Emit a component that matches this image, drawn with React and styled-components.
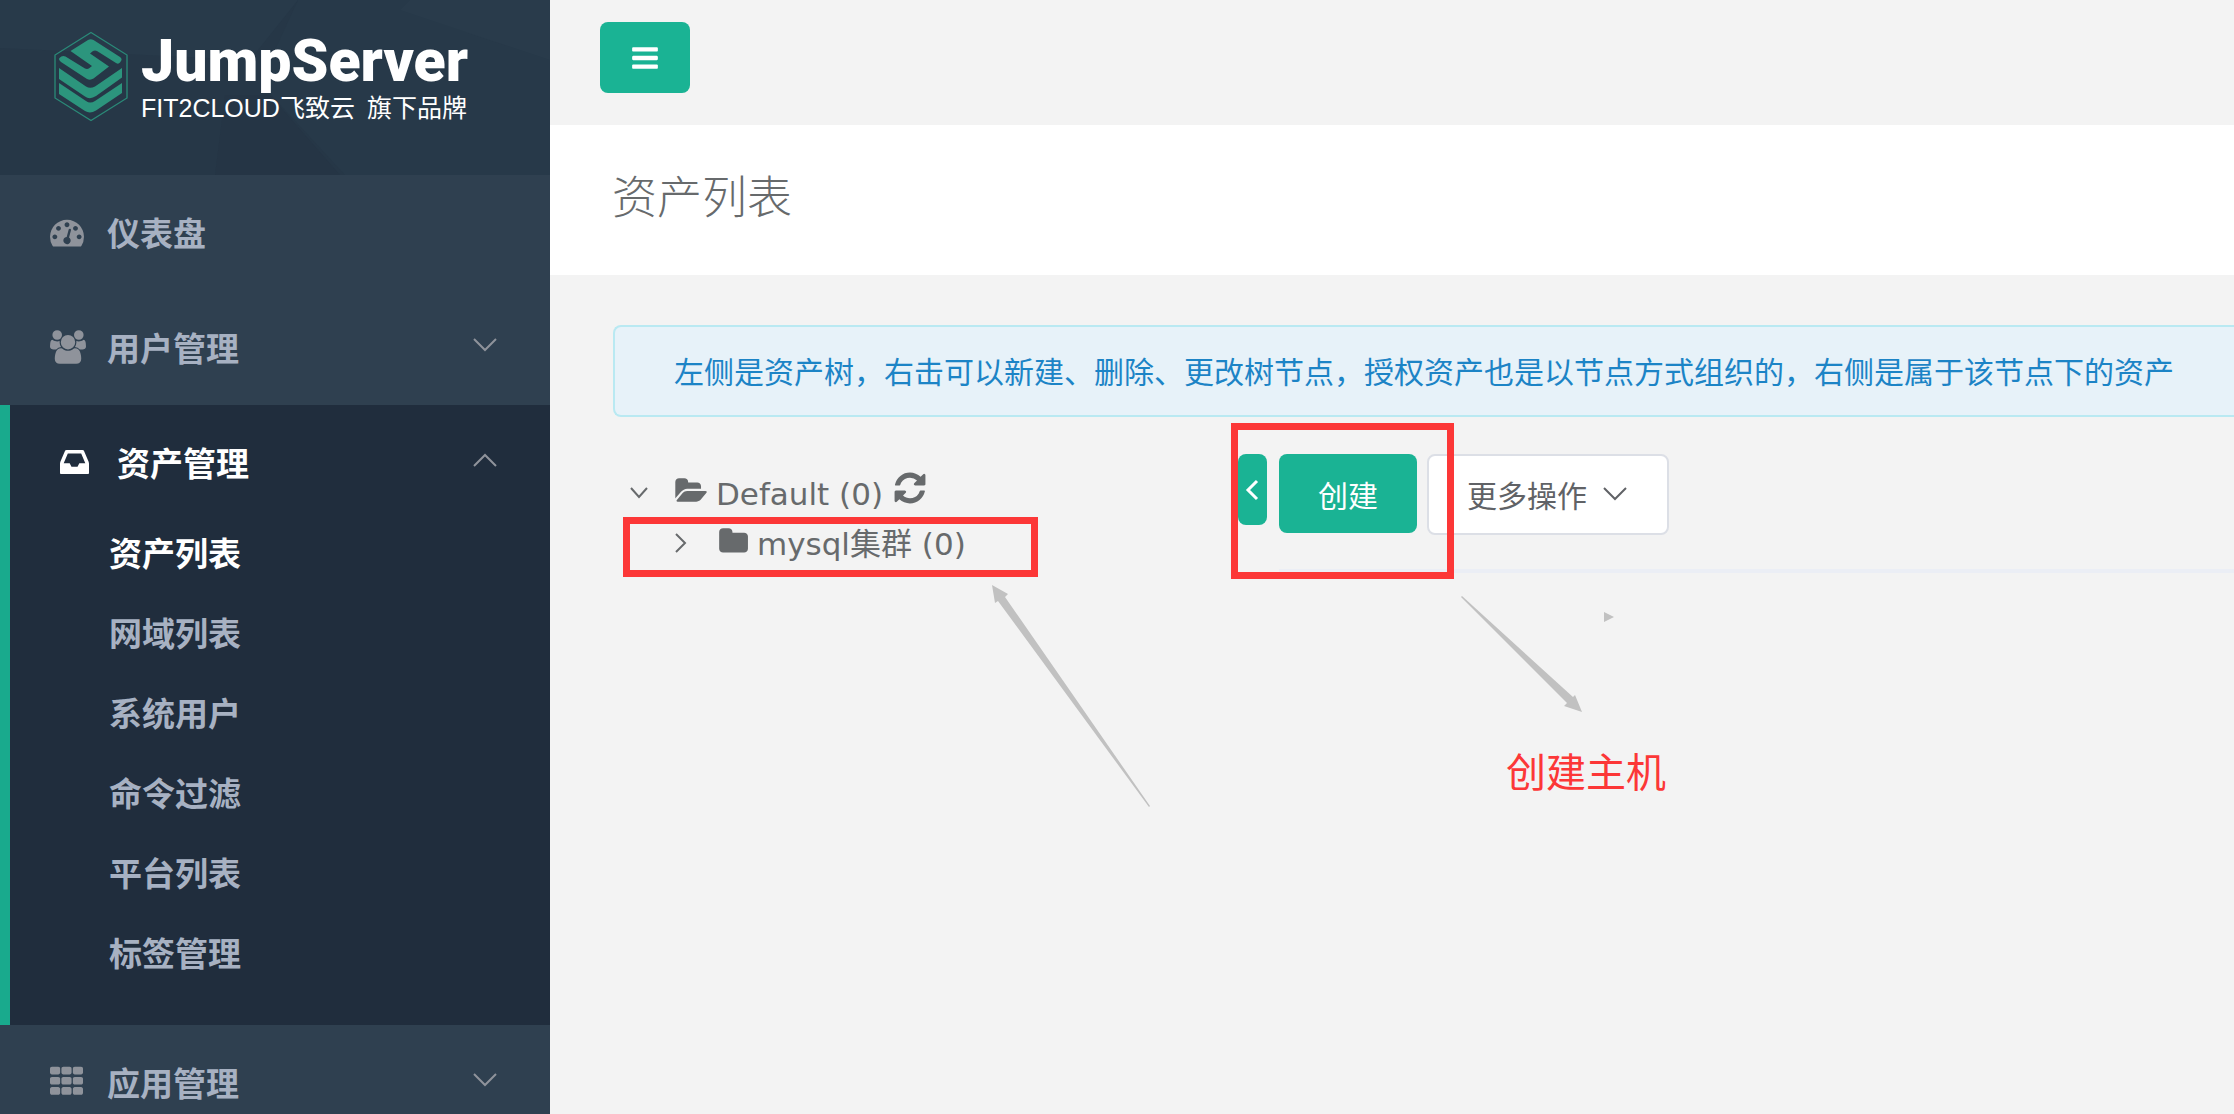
import React from "react";
import styled, { createGlobalStyle, css } from "styled-components";

const sans = '"DejaVu Sans", "Noto Sans CJK SC", sans-serif';
const cjk = '"Noto Sans CJK SC", "Liberation Sans", sans-serif';

const Global = createGlobalStyle`
  *, *::before, *::after { box-sizing: border-box; }
  body { margin: 0; background: #f3f3f3; overflow: hidden; font-family: ${cjk}; color: #676a6c; }
  button { font-family: inherit; cursor: pointer; }
  a { color: inherit; text-decoration: none; }
`;

const List = styled.ul`
  list-style: none;
  margin: 0;
  padding: 0;
`;

const Page = styled.div`
  display: grid;
  grid-template-columns: 550px minmax(0, 1fr);
  height: 100vh;
  overflow: hidden;
`;

const Sidebar = styled.aside`
  background: #2f4050;
  overflow: hidden;
`;

const Brand = styled.a`
  display: flex;
  gap: 13px;
  height: 175px;
  padding: 31px 0 0 54px;
  position: relative;
  color: #fff;
  background: #263747;
`;

const BrandPattern = styled.svg`
  position: absolute;
  inset: 0;
  width: 100%;
  height: 100%;
`;

const BrandMark = styled.svg`
  position: relative;
  width: 74px;
  height: 91px;
  flex: none;
`;

const BrandText = styled.div`
  position: relative;
  display: flex;
  flex-direction: column;
`;

const BrandName = styled.span`
  font: 900 59px/60px Roboto, sans-serif;
`;

const BrandTag = styled.span`
  display: flex;
  gap: 12px;
  font: 25px/34px "Liberation Sans", "Noto Sans CJK SC", sans-serif;
  white-space: nowrap;
`;

const MenuGroup = styled.li`
  color: #a7b1c2;
  ${(p) =>
    p.$active &&
    css`
      color: #fff;
      background: #202d3d;
      border-left: 10px solid #19aa8d;
    `}
`;

const MenuLink = styled.a`
  display: flex;
  align-items: center;
  height: 115px;
  padding: 0 53px 2px 50px;
  font-size: 33px;
  line-height: 48px;
  font-weight: 700;
`;

const MenuIcon = styled.span`
  display: flex;
  width: 57px;
  color: ${(p) => (p.$active ? "#fff" : "#8f939b")};
`;

const MenuLabel = styled.span`
  flex: 1;
`;

const Arrow = styled.svg`
  width: 24px;
  height: 14px;
  margin-bottom: 4px;
  color: #8f939b;
`;

const SubMenu = styled(List)`
  display: grid;
  gap: 14px;
  padding-bottom: 39px;
`;

const SubLink = styled.a`
  display: flex;
  align-items: center;
  height: 66px;
  padding: 0 0 2px 99px;
  font-size: 33px;
  line-height: 48px;
  font-weight: 700;
  color: ${(p) => (p.$active ? "#fff" : "#a7b1c2")};
`;

const Main = styled.main`
  min-width: 0;
`;

const TopBar = styled.header`
  display: flex;
  align-items: flex-start;
  height: 125px;
  padding: 22px 50px 0;
`;

const ToggleButton = styled.button`
  display: flex;
  align-items: center;
  justify-content: center;
  width: 90px;
  height: 71px;
  border: 0;
  border-radius: 8px;
  background: #1ab394;
  color: #fff;
`;

const Heading = styled.div`
  display: flex;
  align-items: center;
  height: 150px;
  padding: 0 62px 10px;
  background: #fff;
`;

const Title = styled.h1`
  margin: 0;
  font-size: 45px;
  line-height: 60px;
  font-weight: 300;
`;

const Content = styled.section`
  padding: 50px 0 0 63px;
`;

const Alert = styled.div`
  height: 92px;
  padding: 21px 59px;
  border: 2px solid #b9e9f2;
  border-right: 0;
  border-radius: 8px 0 0 8px;
  background: #e7f2f9;
  color: #1c84c6;
  font-size: 30px;
  line-height: 44px;
  white-space: nowrap;
`;

const Workspace = styled.div`
  position: relative;
  display: grid;
  grid-template-columns: 625px minmax(0, 1fr);
  padding-top: 37px;
`;

const Tree = styled(List)`
  font-family: ${sans};
  font-size: 31px;
  line-height: 40px;
  padding: 12px 0 0 16px;
`;

const TreeRow = styled.div`
  display: flex;
  align-items: center;
  height: 50px;
  padding-left: ${(p) => p.$level * 44}px;
`;

const Twisty = styled.button`
  display: flex;
  align-items: center;
  width: 45px;
  padding: 3px 0 0;
  border: 0;
  background: none;
  color: #676a6c;
`;

const NodeLink = styled.a`
  display: flex;
  align-items: center;
  gap: 9px;
  white-space: nowrap;
`;

const NodeName = styled.span`
  padding-top: 6px;
`;

const RefreshButton = styled.button`
  display: flex;
  padding: 0;
  margin: 0 0 6px 9px;
  border: 0;
  background: none;
  color: #676a6c;
`;

const Panel = styled.div`
  display: flex;
  align-items: flex-start;
  gap: 12px;
`;

const CollapseButton = styled.button`
  display: flex;
  align-items: center;
  justify-content: center;
  width: 29px;
  height: 71px;
  padding: 0 1px 0 0;
  border: 0;
  border-radius: 8px;
  background: #1ab394;
  color: #fff;
`;

const PanelBody = styled.div`
  flex: 1;
  min-width: 0;
`;

const Toolbar = styled.div`
  display: flex;
  align-items: flex-start;
  gap: 10px;
  height: 119px;
  border-bottom: 4px solid #ebeef5;
`;

const Button = styled.button`
  display: flex;
  align-items: center;
  gap: 16px;
  height: ${(p) => (p.$primary ? 79 : 81)}px;
  padding: ${(p) => (p.$primary ? "0 39px" : "0 40px 2px 38px")};
  border: ${(p) => (p.$primary ? "0" : "2px solid #dcdfe6")};
  border-radius: 8px;
  background: ${(p) => (p.$primary ? "#1ab394" : "#fff")};
  color: ${(p) => (p.$primary ? "#fff" : "#606266")};
  font-size: 30px;
  line-height: 44px;
`;

const MarkBox = styled.div`
  position: absolute;
  left: ${(p) => p.$x}px;
  top: ${(p) => p.$y}px;
  width: ${(p) => p.$w}px;
  height: ${(p) => p.$h}px;
  border: 7px solid #fc3737;
  pointer-events: none;
`;

const MarkArrows = styled.svg`
  position: absolute;
  left: 370px;
  top: 160px;
  width: 640px;
  height: 240px;
  pointer-events: none;
`;

const MarkText = styled.p`
  position: absolute;
  left: 893px;
  top: 323px;
  margin: 0;
  font-size: 40px;
  line-height: 60px;
  color: #fc3737;
`;

const glyphs = {
  dashboard: [1792, "M384 1152q0-53-37.5-90.5t-90.5-37.5-90.5 37.5-37.5 90.5 37.5 90.5 90.5 37.5 90.5-37.5 37.5-90.5zm192-448q0-53-37.5-90.5t-90.5-37.5-90.5 37.5-37.5 90.5 37.5 90.5 90.5 37.5 90.5-37.5 37.5-90.5zm428 481l101-382q6-26-7.5-48.5t-38.5-29.5-48 6.5-30 39.5l-101 382q-60 5-107 43.5t-63 98.5q-20 77 20 146t117 89 146-20 89-117q16-60-6-117t-72-91zm660-33q0-53-37.5-90.5t-90.5-37.5-90.5 37.5-37.5 90.5 37.5 90.5 90.5 37.5 90.5-37.5 37.5-90.5zm-640-640q0-53-37.5-90.5t-90.5-37.5-90.5 37.5-37.5 90.5 37.5 90.5 90.5 37.5 90.5-37.5 37.5-90.5zm448 192q0-53-37.5-90.5t-90.5-37.5-90.5 37.5-37.5 90.5 37.5 90.5 90.5 37.5 90.5-37.5 37.5-90.5zm320 448q0 261-141 483-19 29-54 29h-1402q-35 0-54-29-141-221-141-483 0-182 71-348t191-286 286-191 348-71 348 71 286 191 191 286 71 348z"],
  group: [1920, "M593 896q-162 5-265 128h-134q-82 0-138-40.5t-56-118.5q0-353 124-353 6 0 43.5 21t97.5 42.5 119 21.5q67 0 133-23-5 37-5 66 0 139 81 256zm1071 637q0 120-73 189.5t-194 69.5h-874q-121 0-194-69.5t-73-189.5q0-53 3.5-103.5t14-109 26.5-108.5 43-97.5 62-81 85.5-53.5 111.5-20q10 0 43 21.5t73 48 107 48 135 21.5 135-21.5 107-48 73-48 43-21.5q61 0 111.5 20t85.5 53.5 62 81 43 97.5 26.5 108.5 14 109 3.5 103.5zm-1024-1277q0 106-75 181t-181 75-181-75-75-181 75-181 181-75 181 75 75 181zm704 384q0 159-112.5 271.5t-271.5 112.5-271.5-112.5-112.5-271.5 112.5-271.5 271.5-112.5 271.5 112.5 112.5 271.5zm576 225q0 78-56 118.5t-138 40.5h-134q-103-123-265-128 81-117 81-256 0-29-5-66 66 23 133 23 59 0 119-21.5t97.5-42.5 43.5-21q124 0 124 353zm-128-609q0 106-75 181t-181 75-181-75-75-181 75-181 181-75 181 75 75 181z"],
  inbox: [1536, "M1023 960h316q-1-3-2.500-8.500t-2.500-7.500l-212-496h-708l-212 496q-1 3-2.500 8.500t-2.500 7.500h316l95 192h320zm513 30v482q0 26-19 45t-45 19h-1408q-26 0-45-19t-19-45v-482q0-62 25-123l238-552q10-25 36.500-42t52.500-17h832q26 0 52.500 17t36.500 42l238 552q25 61 25 123z"],
  grid: [1664, "M512 1248v192q0 40-28 68t-68 28h-320q-40 0-68-28t-28-68v-192q0-40 28-68t68-28h320q40 0 68 28t28 68zm0-512v192q0 40-28 68t-68 28h-320q-40 0-68-28t-28-68v-192q0-40 28-68t68-28h320q40 0 68 28t28 68zm576 512v192q0 40-28 68t-68 28h-320q-40 0-68-28t-28-68v-192q0-40 28-68t68-28h320q40 0 68 28t28 68zm-576-1024v192q0 40-28 68t-68 28h-320q-40 0-68-28t-28-68v-192q0-40 28-68t68-28h320q40 0 68 28t28 68zm576 512v192q0 40-28 68t-68 28h-320q-40 0-68-28t-28-68v-192q0-40 28-68t68-28h320q40 0 68 28t28 68zm576 512v192q0 40-28 68t-68 28h-320q-40 0-68-28t-28-68v-192q0-40 28-68t68-28h320q40 0 68 28t28 68zm-576-1024v192q0 40-28 68t-68 28h-320q-40 0-68-28t-28-68v-192q0-40 28-68t68-28h320q40 0 68 28t28 68zm576 512v192q0 40-28 68t-68 28h-320q-40 0-68-28t-28-68v-192q0-40 28-68t68-28h320q40 0 68 28t28 68zm0-512v192q0 40-28 68t-68 28h-320q-40 0-68-28t-28-68v-192q0-40 28-68t68-28h320q40 0 68 28t28 68z"],
  bars: [1536, "M1536 1344v128q0 26-19 45t-45 19h-1408q-26 0-45-19t-19-45v-128q0-26 19-45t45-19h1408q26 0 45 19t19 45zm0-512v128q0 26-19 45t-45 19h-1408q-26 0-45-19t-19-45v-128q0-26 19-45t45-19h1408q26 0 45 19t19 45zm0-512v128q0 26-19 45t-45 19h-1408q-26 0-45-19t-19-45v-128q0-26 19-45t45-19h1408q26 0 45 19t19 45z"],
  folder: [1728, "M1728 608v704q0 92-66 158t-158 66h-1216q-92 0-158-66t-66-158v-960q0-92 66-158t158-66h320q92 0 158 66t66 158v32h672q92 0 158 66t66 158z"],
  folderOpen: [1943, "M1943 952q0 31-31 66l-336 396q-43 51-120.500 86.500t-143.500 35.500h-1088q-34 0-60.500-13t-26.500-43q0-31 31-66l336-396q43-51 120.500-86.500t143.500-35.500h1088q34 0 60.500 13t26.500 43zm-343-344v160h-832q-94 0-197 47.500t-164 119.500l-337 396-5 6q0-4-.5-12.500t-.5-12.500v-960q0-92 66-158t158-66h320q92 0 158 66t66 158v32h544q92 0 158 66t66 158z"],
  refresh: [1792, "M1639 1056q0 5-1 7-64 268-268 434.500t-478 166.500q-146 0-282.500-55t-243.500-157l-129 129q-19 19-45 19t-45-19-19-45v-448q0-26 19-45t45-19h448q26 0 45 19t19 45-19 45l-137 137q71 66 161 102t187 36q134 0 250-65t186-179q11-17 53-117 8-23 30-23h192q13 0 22.500 9.500t9.500 22.500zm25-800v448q0 26-19 45t-45 19h-448q-26 0-45-19t-19-45 19-45l138-138q-148-137-349-137-134 0-250 65t-186 179q-11 17-53 117-8 23-30 23h-199q-13 0-22.500-9.500t-9.500-22.500v-7q65-268 270-434.500t480-166.500q146 0 284 55.500t245 156.500l130-129q19-19 45-19t45 19 19 45z"],
};

function Glyph({ name, size }) {
  const [w, d] = glyphs[name];
  return (
    <svg height={size} width={Math.round((size * w) / 1792)} viewBox={`0 0 ${w} 1792`} fill="currentColor" aria-hidden="true">
      <path d={d} />
    </svg>
  );
}

function Chevron({ up }) {
  return (
    <Arrow viewBox="0 0 24 14" fill="none" stroke="currentColor" strokeWidth="2" aria-hidden="true">
      <path d={up ? "M1 13L12 2L23 13" : "M1 1L12 12L23 1"} />
    </Arrow>
  );
}

function Logo() {
  return (
    <Brand href="#" aria-label="JumpServer">
      <BrandPattern viewBox="0 0 550 175" preserveAspectRatio="none" aria-hidden="true">
        <path d="M0 0H298L250 60L0 48Z" fill="#283a4a" />
        <path d="M298 0H550V175H345L262 85L275 50Z" fill="#273949" />
        <path d="M410 0H550V60L400 10Z" fill="#293b4b" />
        <path d="M225 95H270L340 175H215Z" fill="#253545" />
      </BrandPattern>
      <BrandMark viewBox="0 0 74 91" aria-hidden="true">
        <path d="M37 1.500L73 24V67L37 89.500L1 67V24Z" fill="none" stroke="#2a8a78" strokeWidth="1.300" />
        <g fill="#2c957d">
          <path d="M34 9Q36.500 7.500 39.500 9L66 26Q68.500 28 67 30L66 31.500Q64.500 33.500 62 32L43 20Q41 19 39 20L36 22.500L55 35.500L39.500 47.500Q36.500 49.500 33 48L7 31Q4 28.500 5.500 27Q8 24 11.500 25.500L31 37.500Q33.500 38.500 35.500 37L38 35L16.500 20Z" />
          <path d="M5 37L32 55.500Q36 58 41 55.500L68 37V46.500L42 65Q36 69 31 65.500L5 48Z" />
          <path d="M5 52L32 70Q36 73 41 70L68 52V62L42 79.500Q36 83 31 80L5 63Z" />
        </g>
      </BrandMark>
      <BrandText>
        <BrandName>JumpServer</BrandName>
        <BrandTag>
          <span>FIT2CLOUD飞致云</span>
          <span>旗下品牌</span>
        </BrandTag>
      </BrandText>
    </Brand>
  );
}

function MenuItem({ icon, size, label, active, arrow, children }) {
  return (
    <MenuGroup $active={active}>
      <MenuLink href="#">
        <MenuIcon $active={active}>
          <Glyph name={icon} size={size} />
        </MenuIcon>
        <MenuLabel>{label}</MenuLabel>
        {arrow && <Chevron up={arrow === "up"} />}
      </MenuLink>
      {children}
    </MenuGroup>
  );
}

const assetPages = ["资产列表", "网域列表", "系统用户", "命令过滤", "平台列表", "标签管理"];

export default function App() {
  return (
    <Page>
      <Global />
      <Sidebar>
        <Logo />
        <nav>
          <List>
            <MenuItem icon="dashboard" size={34} label="仪表盘" />
            <MenuItem icon="group" size={34} label="用户管理" arrow="down" />
            <MenuItem icon="inbox" size={34} label="资产管理" arrow="up" active>
              <SubMenu>
                {assetPages.map((name, i) => (
                  <li key={name}>
                    <SubLink href="#" $active={i === 0}>{name}</SubLink>
                  </li>
                ))}
              </SubMenu>
            </MenuItem>
            <MenuItem icon="grid" size={36} label="应用管理" arrow="down" />
          </List>
        </nav>
      </Sidebar>
      <Main>
        <TopBar>
          <ToggleButton aria-label="切换菜单">
            <Glyph name="bars" size={30} />
          </ToggleButton>
        </TopBar>
        <Heading>
          <Title>资产列表</Title>
        </Heading>
        <Content>
          <Alert role="note">
            左侧是资产树，右击可以新建、删除、更改树节点，授权资产也是以节点方式组织的，右侧是属于该节点下的资产
          </Alert>
          <Workspace>
            <Tree>
              <li>
                <TreeRow $level={0}>
                  <Twisty aria-label="收起">
                    <svg width="20" height="12" viewBox="0 0 20 12" fill="none" stroke="currentColor" strokeWidth="2">
                      <path d="M2 1L10 10L18 1" />
                    </svg>
                  </Twisty>
                  <NodeLink href="#">
                    <Glyph name="folderOpen" size={30} />
                    <NodeName>Default (0)</NodeName>
                  </NodeLink>
                  <RefreshButton aria-label="刷新">
                    <Glyph name="refresh" size={36} />
                  </RefreshButton>
                </TreeRow>
                <List>
                  <li>
                    <TreeRow $level={1}>
                      <Twisty aria-label="展开">
                        <svg width="14" height="20" viewBox="0 0 14 20" fill="none" stroke="currentColor" strokeWidth="2">
                          <path d="M3 1L12 10L3 19" />
                        </svg>
                      </Twisty>
                      <NodeLink href="#">
                        <Glyph name="folder" size={31} />
                        <NodeName>mysql集群 (0)</NodeName>
                      </NodeLink>
                    </TreeRow>
                  </li>
                </List>
              </li>
            </Tree>
            <Panel>
              <CollapseButton aria-label="收起资产树">
                <svg width="14" height="22" viewBox="0 0 14 22" fill="none" stroke="currentColor" strokeWidth="3">
                  <path d="M12 2L3 11L12 20" />
                </svg>
              </CollapseButton>
              <PanelBody>
                <Toolbar>
                  <Button $primary>创建</Button>
                  <Button>
                    更多操作
                    <svg width="24" height="14" viewBox="0 0 24 14" fill="none" stroke="currentColor" strokeWidth="2">
                      <path d="M1 1L12 12L23 1" />
                    </svg>
                  </Button>
                </Toolbar>
              </PanelBody>
            </Panel>
            <MarkBox $x={10} $y={100} $w={415} $h={60} />
            <MarkBox $x={618} $y={6} $w={223} $h={156} />
            <MarkArrows viewBox="983 577 640 240" fill="#c1c1c1" aria-hidden="true">
              <path d="M992 585L1008 594L1005 597L1150 806L1149 807L998 601L995 603Z" />
              <path d="M1462 596L1573 697L1575 695L1582 712L1564 706L1567 703L1461 597Z" />
              <path d="M1604 612L1614 617L1604 622Z" />
            </MarkArrows>
            <MarkText>创建主机</MarkText>
          </Workspace>
        </Content>
      </Main>
    </Page>
  );
}
